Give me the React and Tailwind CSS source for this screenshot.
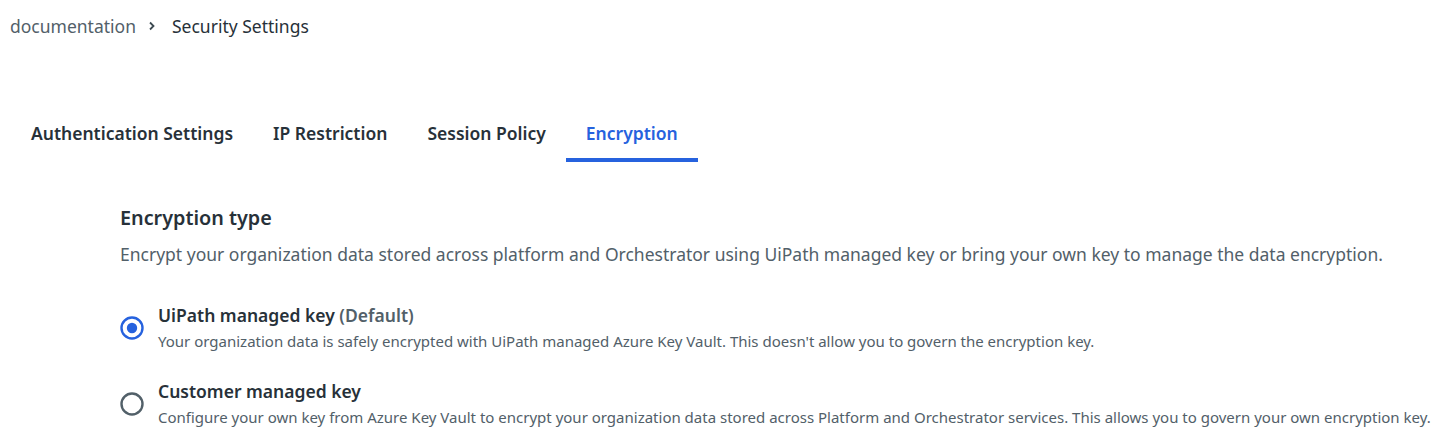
import React from "react";

const font = { fontFamily: '"Noto Sans", "Open Sans", sans-serif' };

function Radio({ checked }) {
  return (
    <svg width="24" height="24" viewBox="0 0 24 24" className="shrink-0">
      <circle cx="12" cy="12" r="10.5" fill="none" stroke={checked ? "#2662de" : "#526069"} strokeWidth="2.4" />
      {checked && <circle cx="12" cy="12" r="5.2" fill="#2662de" />}
    </svg>
  );
}

export default function App() {
  const tabs = ["Authentication Settings", "IP Restriction", "Session Policy", "Encryption"];
  return (
    <div className="w-[1439px] h-[439px] bg-white overflow-hidden" style={font}>
      <div className="flex items-center pl-[10px] pt-[13px] h-[26px] box-content text-[17.5px] leading-[26px]">
        <span className="text-[#526069]">documentation</span>
        <svg width="10" height="10" viewBox="0 0 10 10" className="ml-[11px] mr-[15px]">
          <path d="M3 1.5 L6.5 5 L3 8.5" fill="none" stroke="#3d4a52" strokeWidth="1.8" />
        </svg>
        <span className="text-[#273139]">Security Settings</span>
      </div>

      <div className="flex pl-[11px] mt-[70px]">
        {tabs.map((t) => {
          const active = t === "Encryption";
          return (
            <div
              key={t}
              className={
                "px-[20px] h-[53px] flex items-center text-[17.5px] font-semibold border-b-4 pb-[1px] " +
                (active ? "text-[#2662de] border-[#2662de]" : "text-[#273139] border-transparent")
              }
            >
              {t}
            </div>
          );
        })}
      </div>

      <div className="pl-[120px] pt-[42px]">
        <h2 className="text-[19.8px] font-semibold text-[#273139] leading-[28px]">Encryption type</h2>
        <p className="mt-[10px] text-[17.5px] text-[#526069] leading-[24px]">
          Encrypt your organization data stored across platform and Orchestrator using UiPath managed key or bring your own key to manage the data encryption.
        </p>

        <div className="mt-[37px] flex items-center gap-[14px]">
          <Radio checked />
          <div>
            <div className="text-[17.5px] font-semibold text-[#273139] leading-[24px]">
              UiPath managed key <span className="text-[#526069]">(Default)</span>
            </div>
            <div className="text-[15px] text-[#526069] leading-[24px] mt-[2px]">
              Your organization data is safely encrypted with UiPath managed Azure Key Vault. This doesn't allow you to govern the encryption key.
            </div>
          </div>
        </div>

        <div className="mt-[26px] flex items-center gap-[14px]">
          <Radio />
          <div>
            <div className="text-[17.5px] font-semibold text-[#273139] leading-[24px]">Customer managed key</div>
            <div className="text-[15px] text-[#526069] leading-[24px] mt-[2px]">
              Configure your own key from Azure Key Vault to encrypt your organization data stored across Platform and Orchestrator services. This allows you to govern your own encryption key.
            </div>
          </div>
        </div>
      </div>
    </div>
  );
}
